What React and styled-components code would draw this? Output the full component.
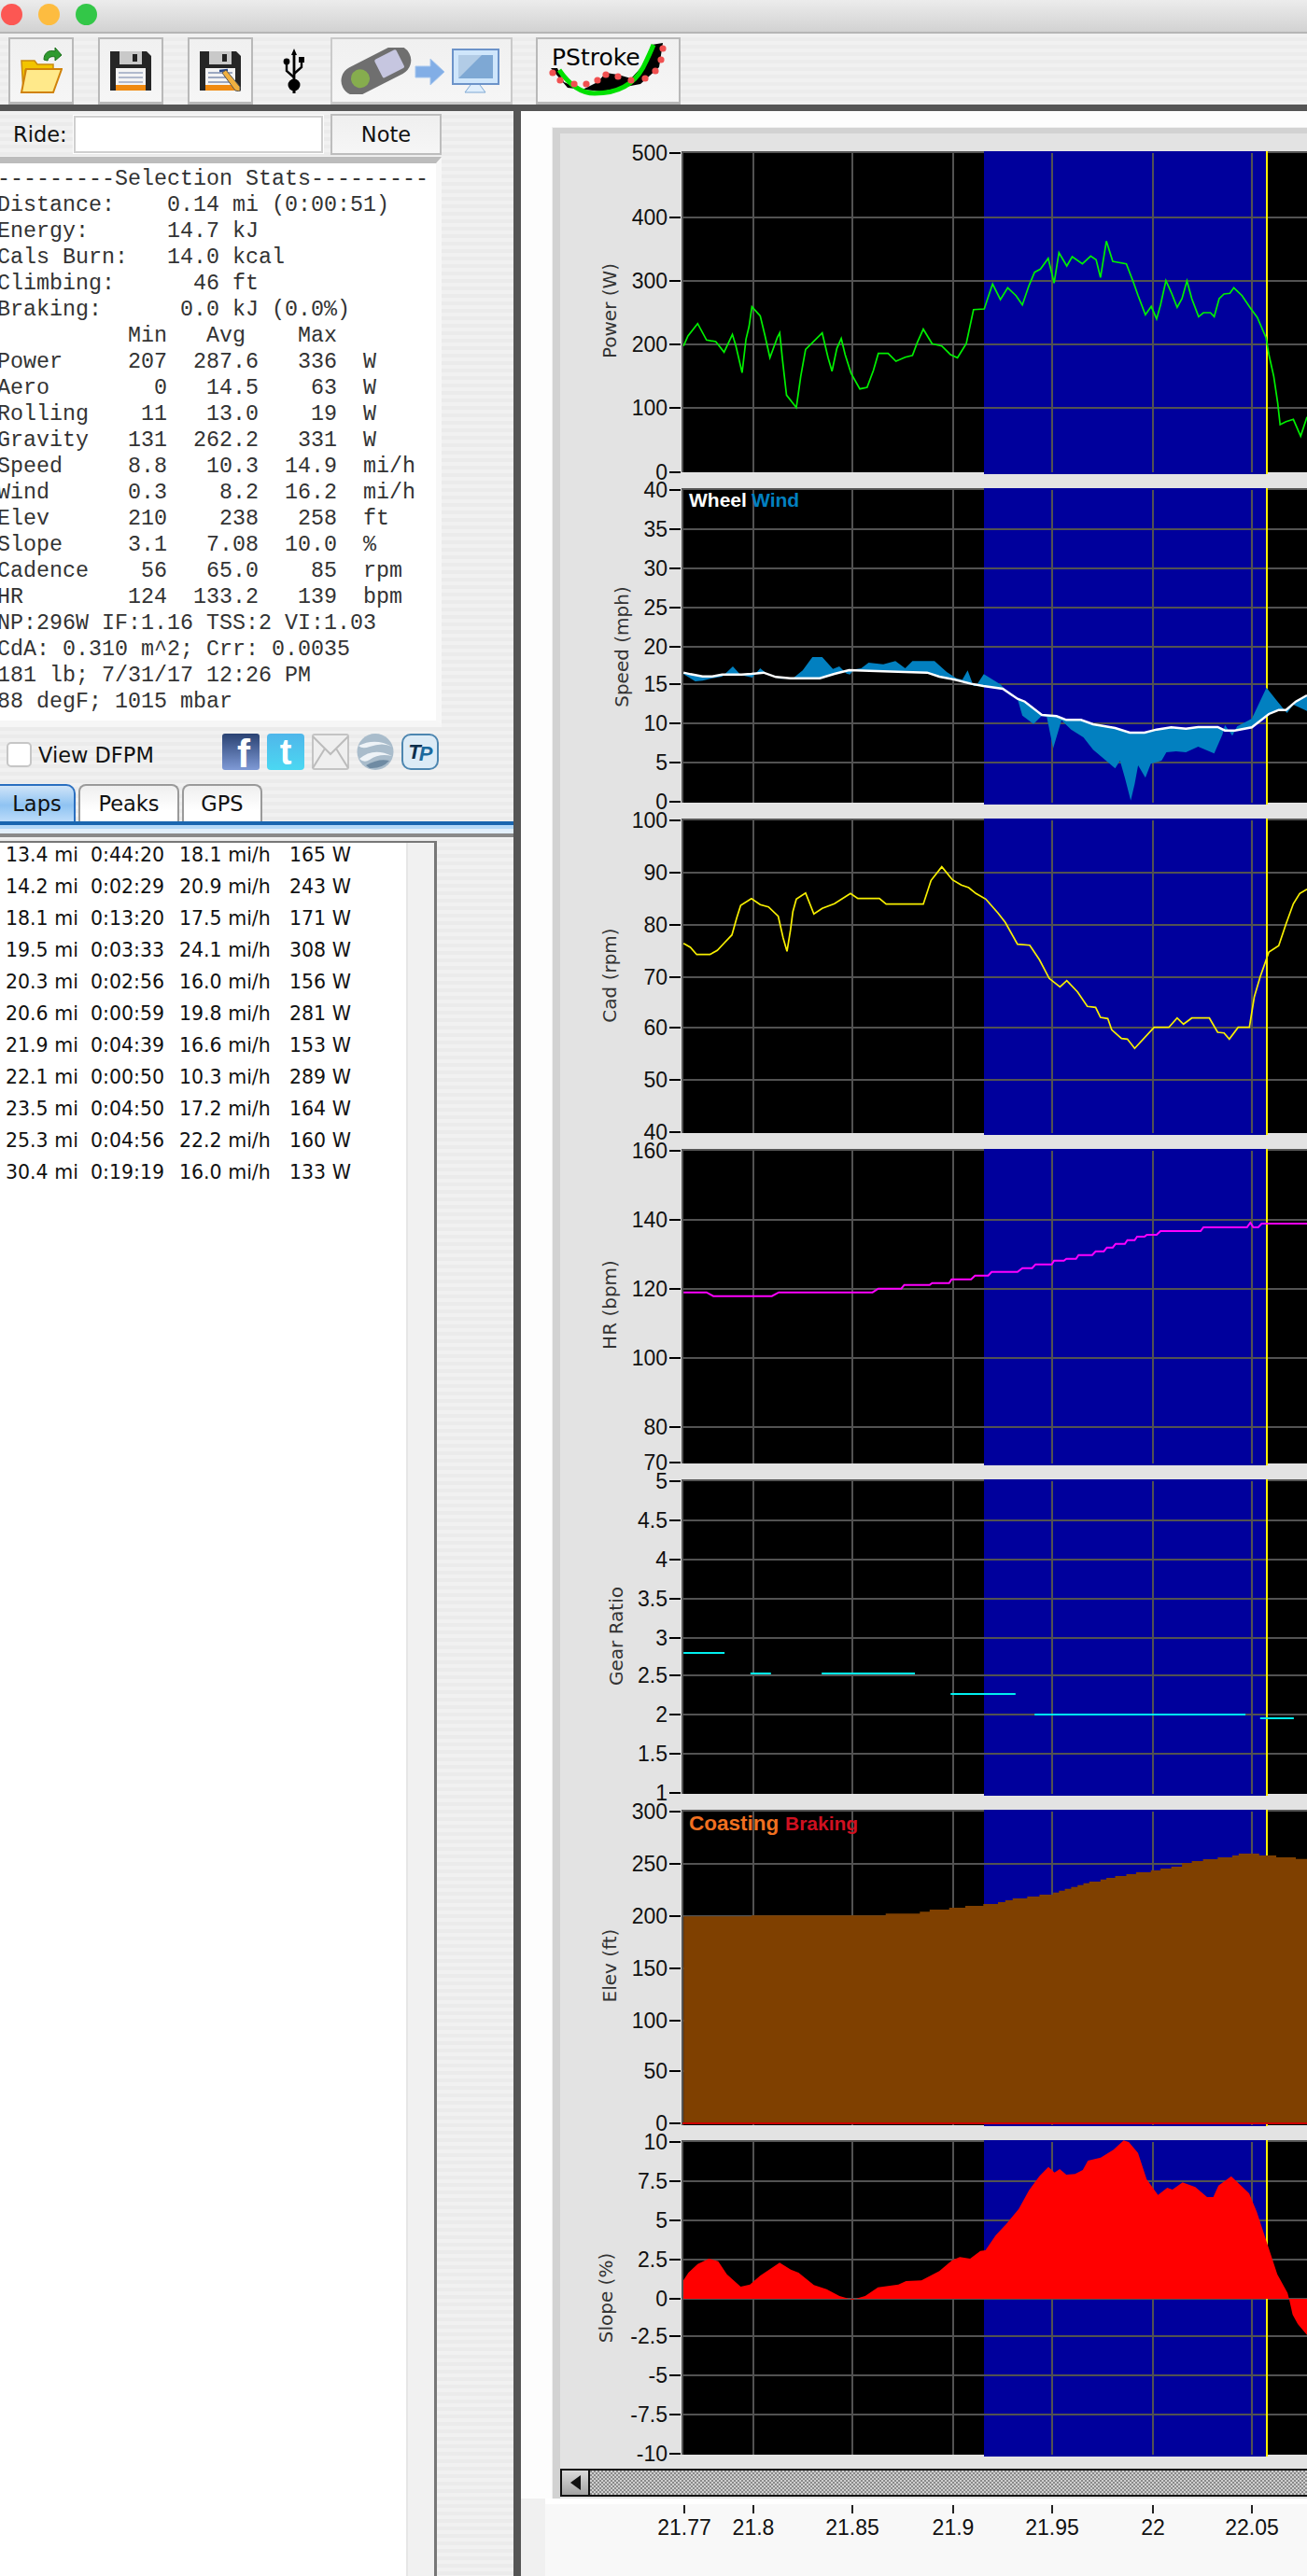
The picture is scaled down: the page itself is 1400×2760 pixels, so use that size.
import styled, { createGlobalStyle } from "styled-components"

const Global = createGlobalStyle`
    html, body {
        margin: 0;
        padding: 0;
        background: #f0f0f0;
        overflow: hidden;
    }
    * {
        box-sizing: border-box;
    }
`

const Window = styled.div`
    width: 1400px;
    height: 2760px;
    display: flex;
    flex-direction: column;
    overflow: hidden;
    font-family: "DejaVu Sans", sans-serif;
    color: #111;
`

const TitleBar = styled.div`
    height: 36px;
    flex: none;
    display: flex;
    align-items: center;
    gap: 17px;
    padding: 0 0 4px 1px;
    background: linear-gradient(#ececec, #d2d2d2);
    border-bottom: 2px solid #b6b6b6;
`

const Light = styled.span`
    width: 23px;
    height: 23px;
    border-radius: 50%;
    background: ${(p) => p.$color};
`

const Toolbar = styled.div`
    height: 76px;
    flex: none;
    display: flex;
    align-items: flex-end;
    padding-left: 9px;
    background: repeating-linear-gradient(#f1f1f1 0 4px, #ececec 4px 8px);
`

const ToolButton = styled.div`
    width: ${(p) => p.$w}px;
    height: 72px;
    margin-right: ${(p) => p.$gap}px;
    flex: none;
    display: flex;
    align-items: center;
    justify-content: center;
    border: 2px solid ${(p) => p.$line || "#b9b9b9"};
    border-bottom-width: 3px;
    background: linear-gradient(#f0f0f0, #f6f6f6);
`

const PlainTool = styled.div`
    width: 44px;
    height: 72px;
    flex: none;
    margin-right: 17px;
    display: flex;
    align-items: center;
    justify-content: center;
`

const ToolRule = styled.div`
    height: 7px;
    flex: none;
    background: #555;
`

const Body = styled.div`
    flex: 1;
    display: flex;
    min-height: 0;
`

const LeftPane = styled.div`
    width: 550px;
    flex: none;
    display: flex;
    flex-direction: column;
    background: repeating-linear-gradient(#f1f1f1 0 4px, #ebebeb 4px 8px);
`

const Divider = styled.div`
    width: 8px;
    flex: none;
    background: #555;
`

const RideRow = styled.div`
    height: 49px;
    flex: none;
    display: flex;
    align-items: center;
    padding-left: 14px;
    font-size: 22.5px;
`

const RideLabel = styled.span`
    width: 65px;
    flex: none;
`

const RideInput = styled.div`
    width: 267px;
    height: 40px;
    flex: none;
    margin-right: 8px;
    background: #fff;
    border: 2px solid #cfcfcf;
    box-shadow: 0 0 0 1px #fff;
`

const NoteButton = styled.div`
    width: 119px;
    height: 44px;
    flex: none;
    display: flex;
    align-items: center;
    justify-content: center;
    background: linear-gradient(#efefef, #f6f6f6);
    border: 2px solid #bdbdbd;
`

const StatsFrame = styled.div`
    width: 473px;
    height: 611px;
    flex: none;
    display: flex;
    flex-direction: column;
    border-top: 7px solid #bcbcbc;
    border-bottom: 7px solid #f6f6f6;
    border-right: 6px solid #f7f7f7;
`

const StatsBody = styled.div`
    flex: 1;
    padding-top: 3px;
    overflow: hidden;
    background: #fff;
`

const StatLine = styled.div`
    height: 28px;
    line-height: 28px;
    margin-left: -3px;
    white-space: pre;
    font-family: "Liberation Mono", monospace;
    font-size: 23.33px;
    color: #333;
`

const OptionsRow = styled.div`
    height: 61px;
    flex: none;
    display: flex;
    align-items: flex-start;
    justify-content: space-between;
    padding: 7px 80px 0 7px;
`

const CheckRow = styled.div`
    display: flex;
    align-items: center;
    gap: 7px;
    margin-top: 9px;
    font-size: 22.5px;
`

const CheckBox = styled.span`
    width: 27px;
    height: 27px;
    background: #fff;
    border: 2px solid #c6c6c6;
    border-radius: 5px;
`

const SocialRow = styled.div`
    display: flex;
    gap: 8px;
`

const TabBar = styled.div`
    height: 40px;
    flex: none;
    display: flex;
    gap: 3px;
    font-size: 22.5px;
`

const Tab = styled.div`
    width: ${(p) => p.$w}px;
    flex: none;
    display: flex;
    align-items: center;
    justify-content: center;
    border: 2px solid ${(p) => (p.$active ? "#2a6fc0" : "#9a9a9a")};
    border-bottom: 0;
    border-left-width: ${(p) => (p.$active ? 0 : 2)}px;
    border-radius: ${(p) => (p.$active ? "0 10px 0 0" : "8px 8px 0 0")};
    background: ${(p) =>
        p.$active
            ? "linear-gradient(#cfe4f8, #8fc3f2 55%, #bcdcfa)"
            : "linear-gradient(#efefef, #fff 70%)"};
`

const TabRule = styled.div`
    height: 21px;
    flex: none;
    background: linear-gradient(
        #1a66b0 0 4px,
        #b4d8f8 4px 8px,
        #e2effb 8px 13px,
        #8a8a8a 13px 17px,
        transparent 17px
    );
`

const LapFrame = styled.div`
    flex: 1;
    width: 468px;
    display: flex;
    border-top: 2px solid #777;
    border-right: 3px solid #777;
`

const LapList = styled.div`
    width: 435px;
    flex: none;
    display: flex;
    flex-direction: column;
    gap: 8px;
    padding-left: 6px;
    background: #fff;
`

const LapTrack = styled.div`
    flex: 1;
    background: #f1f1f1;
    border-left: 2px solid #e6e6e6;
`

const LapRow = styled.div`
    height: 26px;
    line-height: 26px;
    display: grid;
    grid-template-columns: 91px 95px 118px auto;
    font-size: 20.5px;
    white-space: pre;
`

const RightPane = styled.div`
    flex: 1;
    min-width: 0;
    display: flex;
    flex-direction: column;
    padding-top: 18px;
    background: #fdfdfd;
`

const PlotPanel = styled.div`
    margin-left: 34px;
    height: 2540px;
    flex: none;
    display: flex;
    flex-direction: column;
    background: #e3e3e3;
    border-top: 6px solid #d2d2d2;
    border-left: 8px solid #d2d2d2;
    outline: 1px solid #f0f0f0;
`

const ChartStack = styled.div`
    display: flex;
    flex-direction: column;
    gap: 15px;
    padding-top: 19px;
`

const ChartSvg = styled.svg`
    display: block;
    overflow: visible;
    flex: none;
`

const TickLabel = styled.text`
    font-family: "Liberation Sans", sans-serif;
    font-size: 23px;
    fill: #111;
    text-anchor: end;
`

const AxisTitle = styled.text`
    font-family: "DejaVu Sans", sans-serif;
    font-size: 20px;
    fill: #333;
    text-anchor: middle;
    dominant-baseline: central;
`

const LegendText = styled.text`
    font-family: "Liberation Sans", sans-serif;
    font-size: ${(p) => p.$size || 21}px;
    font-weight: 700;
    fill: ${(p) => p.$color};
`

const ScrollBar = styled.div`
    height: 30px;
    flex: none;
    margin-top: 13px;
    display: flex;
    background: repeating-conic-gradient(#8a8a8a 0 25%, #cfcfcf 0 50%) 0 0 / 4px 4px;
    border-top: 2px solid #111;
    border-bottom: 2px solid #111;
    border-left: 2px solid #111;
`

const ScrollArrow = styled.div`
    width: 30px;
    flex: none;
    display: flex;
    align-items: center;
    justify-content: center;
    background: linear-gradient(#dcdcdc, #a2a2a2);
    border-right: 2px solid #111;
    &::before {
        content: "";
        border-style: solid;
        border-width: 8px 11px 8px 0;
        border-color: transparent #111 transparent transparent;
    }
`

const AxisSvg = styled.svg`
    display: block;
    flex: 1;
    background:
        linear-gradient(90deg, #f0f0f0 0 26px, transparent 26px),
        linear-gradient(#fff 0 6px, #f8f8f8 6px);
`

const AxisLabel = styled.text`
    font-family: "Liberation Sans", sans-serif;
    font-size: 23px;
    fill: #111;
    text-anchor: middle;
`

const statLines = [
    "---------Selection Stats---------",
    "Distance:    0.14 mi (0:00:51)",
    "Energy:      14.7 kJ",
    "Cals Burn:   14.0 kcal",
    "Climbing:      46 ft",
    "Braking:      0.0 kJ (0.0%)",
    "          Min   Avg    Max",
    "Power     207  287.6   336  W",
    "Aero        0   14.5    63  W",
    "Rolling    11   13.0    19  W",
    "Gravity   131  262.2   331  W",
    "Speed     8.8   10.3  14.9  mi/h",
    "Wind      0.3    8.2  16.2  mi/h",
    "Elev      210    238   258  ft",
    "Slope     3.1   7.08  10.0  %",
    "Cadence    56   65.0    85  rpm",
    "HR        124  133.2   139  bpm",
    "NP:296W IF:1.16 TSS:2 VI:1.03",
    "CdA: 0.310 m^2; Crr: 0.0035",
    "181 lb; 7/31/17 12:26 PM",
    "88 degF; 1015 mbar",
]

const laps = [
    ["13.4 mi", "0:44:20", "18.1 mi/h", "165 W"],
    ["14.2 mi", "0:02:29", "20.9 mi/h", "243 W"],
    ["18.1 mi", "0:13:20", "17.5 mi/h", "171 W"],
    ["19.5 mi", "0:03:33", "24.1 mi/h", "308 W"],
    ["20.3 mi", "0:02:56", "16.0 mi/h", "156 W"],
    ["20.6 mi", "0:00:59", "19.8 mi/h", "281 W"],
    ["21.9 mi", "0:04:39", "16.6 mi/h", "153 W"],
    ["22.1 mi", "0:00:50", "10.3 mi/h", "289 W"],
    ["23.5 mi", "0:04:50", "17.2 mi/h", "164 W"],
    ["25.3 mi", "0:04:56", "22.2 mi/h", "160 W"],
    ["30.4 mi", "0:19:19", "16.0 mi/h", "133 W"],
]

const gridX = [807, 913, 1021, 1127, 1235, 1341]
const axisTicks = [
    ["21.77", 733],
    ["21.8", 807],
    ["21.85", 913],
    ["21.9", 1021],
    ["21.95", 1127],
    ["22", 1235],
    ["22.05", 1341],
]

// traced series: x in crop px, y in crop px / 3
const chartX = (v) => 580 + (v * 820) / 1568
const slopeX = (v) => 540 + (v * 860) / 1568
const toPoints = (list, yBase, x = chartX) =>
    list.map(([a, b]) => `${x(a).toFixed(1)},${(yBase + b / 3).toFixed(1)}`).join(" ")

const power = [[291,722],[300,690],[320,650],[338,703],[357,708],[374,742],[391,685],[398,720],[411,808],[419,700],[425,660],[431,596],[448,625],[458,690],[468,760],[475,730],[483,695],[488,680],[494,770],[502,880],[522,920],[531,820],[541,733],[575,680],[587,760],[595,803],[605,730],[614,698],[622,750],[634,810],[652,860],[667,855],[680,800],[690,746],[710,746],[726,771],[745,758],[760,752],[770,710],[782,668],[800,715],[820,722],[838,750],[852,760],[870,715],[885,605],[907,603],[915,565],[924,523],[940,573],[955,535],[972,560],[985,590],[998,530],[1010,485],[1022,475],[1038,440],[1050,520],[1060,422],[1076,465],[1087,435],[1108,458],[1125,433],[1136,445],[1145,502],[1157,385],[1170,450],[1198,458],[1212,515],[1222,560],[1237,622],[1249,595],[1260,635],[1268,590],[1279,512],[1290,550],[1302,598],[1312,570],[1322,513],[1332,570],[1346,628],[1356,615],[1370,615],[1378,628],[1388,570],[1398,555],[1410,553],[1418,535],[1435,560],[1452,600],[1466,630],[1484,695],[1490,750],[1500,820],[1508,905],[1513,975],[1525,965],[1540,958],[1555,1012],[1568,950]]

const wheel = [[291,632],[305,637],[330,644],[350,644],[370,638],[410,638],[430,636],[455,632],[480,646],[510,650],[570,650],[600,636],[630,624],[700,628],[790,632],[815,645],[845,654],[880,668],[905,675],[945,684],[975,716],[990,725],[1025,768],[1055,772],[1075,784],[1105,784],[1130,798],[1175,810],[1205,825],[1235,825],[1260,815],[1290,808],[1320,812],[1345,807],[1385,807],[1400,818],[1420,818],[1455,808],[1490,765],[1510,752],[1525,752],[1545,725],[1568,705]]

const wind = [[291,637],[315,660],[330,658],[350,650],[370,645],[392,612],[408,640],[432,648],[448,618],[465,640],[490,652],[515,650],[535,625],[555,582],[575,582],[597,620],[610,612],[625,635],[632,638],[640,622],[655,618],[670,600],[700,605],[725,595],[745,618],[760,595],[805,595],[830,630],[850,650],[862,655],[873,625],[885,675],[890,675],[906,637],[940,670],[960,705],[975,716],[985,770],[1008,797],[1025,770],[1035,775],[1048,875],[1065,785],[1085,815],[1110,840],[1130,880],[1175,940],[1185,915],[1195,970],[1207,1043],[1215,990],[1222,930],[1237,970],[1248,925],[1270,915],[1280,888],[1300,885],[1320,888],[1345,870],[1378,892],[1395,830],[1400,800],[1415,835],[1425,805],[1455,780],[1485,680],[1505,720],[1527,762],[1540,735],[1568,755]]

const cadence = [[291,422],[305,435],[318,458],[345,458],[360,445],[375,420],[390,395],[400,340],[408,300],[430,278],[448,298],[465,305],[485,335],[495,405],[503,448],[510,380],[515,320],[522,280],[541,260],[558,328],[575,310],[600,295],[633,262],[648,278],[692,278],[706,296],[782,296],[798,220],[820,176],[842,218],[860,235],[875,243],[890,262],[910,280],[935,325],[950,355],[975,425],[1000,428],[1020,475],[1040,535],[1062,562],[1076,542],[1098,578],[1118,625],[1135,628],[1145,660],[1160,664],[1168,700],[1188,728],[1200,730],[1215,760],[1255,692],[1285,692],[1302,662],[1315,682],[1332,662],[1368,662],[1385,708],[1398,710],[1409,730],[1427,692],[1450,692],[1460,595],[1472,530],[1490,450],[1510,430],[1525,360],[1540,295],[1553,262],[1568,248]]

const heart = [[291,464],[338,464],[352,476],[472,476],[486,464],[678,464],[690,452],[737,452],[743,440],[795,440],[800,434],[835,434],[840,422],[880,422],[888,410],[915,410],[922,398],[975,398],[985,386],[1005,386],[1012,374],[1045,374],[1050,362],[1070,362],[1075,356],[1095,356],[1100,344],[1128,344],[1135,332],[1152,332],[1158,320],[1170,320],[1176,308],[1195,308],[1200,296],[1215,296],[1220,285],[1235,285],[1240,279],[1260,279],[1268,267],[1350,267],[1356,255],[1445,255],[1452,240],[1458,255],[1468,255],[1475,243],[1568,243]]

const gears = [[603,291,375],[669,428,470],[669,574,765],[735,838,971],[801,1010,1442],[813,1472,1541]]

const elevation = [[291,400],[430,397],[705,391],[775,385],[795,378],[835,372],[868,366],[905,360],[935,354],[950,348],[965,342],[995,336],[1020,330],[1048,323],[1060,317],[1072,311],[1085,305],[1098,299],[1110,293],[1122,288],[1145,281],[1157,276],[1175,270],[1198,264],[1218,258],[1248,252],[1268,246],[1290,240],[1312,228],[1332,222],[1355,216],[1385,210],[1415,204],[1428,198],[1470,204],[1505,210],[1545,215],[1568,215]]

const slope = [[350,549],[350,490],[360,465],[378,437],[400,420],[418,428],[435,470],[462,510],[480,503],[500,475],[538,433],[560,455],[575,465],[605,505],[630,518],[655,540],[680,552],[705,540],[730,512],[770,503],[785,492],[815,490],[850,460],[875,425],[890,415],[910,420],[930,395],[940,393],[960,345],[980,310],[1005,260],[1025,200],[1045,155],[1063,125],[1075,143],[1085,132],[1098,150],[1115,148],[1130,135],[1140,105],[1165,95],[1190,70],[1210,40],[1220,45],[1238,80],[1255,165],[1277,215],[1295,192],[1305,198],[1325,175],[1350,190],[1373,222],[1385,222],[1395,185],[1420,155],[1455,210],[1470,270],[1490,370],[1510,470],[1530,530],[1533,549],[1540,600],[1550,630],[1568,665],[1568,549]]

const elevationPath = () => {
    const base = 2275
    let d = `M${chartX(elevation[0][0]).toFixed(1)} ${base}`
    elevation.forEach(([a, b], i) => {
        d += ` V${(1920 + b / 3).toFixed(1)}`
        const next = elevation[i + 1]
        if (next) d += ` H${chartX(next[0]).toFixed(1)}`
    })
    return d + ` V${base} Z`
}

const charts = [
    {
        title: "Power (W)", titleX: 653, titleY: 333, top: 162, height: 346, plotEnd: 506,
        ticks: [["500",164],["400",233],["300",301],["200",369],["100",437],["0",506]],
        data: <polyline points={toPoints(power, 130)} fill="none" stroke="#00f000" strokeWidth="1.7" />,
    },
    {
        title: "Speed (mph)", titleX: 666, titleY: 693, top: 523, height: 339, plotEnd: 860,
        ticks: [["40",525],["35",567],["30",609],["25",651],["20",693],["15",733],["10",775],["5",817],["0",859]],
        data: (
            <>
                <polygon points={toPoints([...wheel, ...[...wind].reverse()], 510)} fill="#0280c0" />
                <polyline points={toPoints(wheel, 510)} fill="none" stroke="#fff" strokeWidth="2.4" />
                <LegendText x="738" y="543" $color="#fff">Wheel</LegendText>
                <LegendText x="805" y="543" $color="#0280c0">Wind</LegendText>
            </>
        ),
    },
    {
        title: "Cad (rpm)", titleX: 653, titleY: 1045, top: 877, height: 339, plotEnd: 1214,
        ticks: [["100",879],["90",935],["80",991],["70",1047],["60",1101],["50",1157],["40",1213]],
        data: <polyline points={toPoints(cadence, 870)} fill="none" stroke="#f8f000" strokeWidth="1.7" />,
    },
    {
        title: "HR (bpm)", titleX: 653, titleY: 1398, top: 1231, height: 339, plotEnd: 1568,
        ticks: [["160",1233],["140",1307],["120",1381],["100",1455],["80",1529],["70",1567]],
        data: <polyline points={toPoints(heart, 1230)} fill="none" stroke="#ff00ff" strokeWidth="2" />,
    },
    {
        title: "Gear Ratio", titleX: 660, titleY: 1753, top: 1585, height: 339, plotEnd: 1922,
        ticks: [["5",1587],["4.5",1629],["4",1671],["3.5",1713],["3",1755],["2.5",1795],["2",1837],["1.5",1879],["1",1921]],
        data: gears.map(([y, a, b]) => (
            <line key={a} x1={chartX(a)} x2={chartX(b)} y1={1570 + y / 3} y2={1570 + y / 3} stroke="#00f0f0" strokeWidth="2" />
        )),
    },
    {
        title: "Elev (ft)", titleX: 653, titleY: 2106, top: 1939, height: 339, plotEnd: 2277,
        ticks: [["300",1941],["250",1997],["200",2053],["150",2109],["100",2165],["50",2219],["0",2275]],
        data: (
            <>
                <path d={elevationPath()} fill="#7f4000" />
                <line x1="731" x2="1400" y1="2275" y2="2275" stroke="#cc0000" strokeWidth="2" />
                <LegendText x="738" y="1961" $color="#f07020" $size={22.5}>Coasting</LegendText>
                <LegendText x="841" y="1961" $color="#d01020">Braking</LegendText>
            </>
        ),
    },
    {
        title: "Slope (%)", titleX: 649, titleY: 2462, top: 2293, height: 339, plotEnd: 2630,
        ticks: [["10",2295],["7.5",2337],["5",2379],["2.5",2421],["0",2463],["-2.5",2503],["-5",2545],["-7.5",2587],["-10",2629]],
        data: <polygon points={toPoints(slope, 2280, slopeX)} fill="#ff0000" />,
    },
]

function Chart({ chart }) {
    const { title, titleX, titleY, top, height, plotEnd, ticks, data } = chart
    const inner = ticks.slice(1, -1)
    return (
        <ChartSvg width="800" height={height} viewBox={`600 ${top} 800 ${height}`}>
            <rect x="731" y={top} width="669" height={plotEnd - top} fill="#000" />
            <line x1="731" x2="1400" y1={top + 1} y2={top + 1} stroke="#555" strokeWidth="2" />
            <rect x="1054" y={top} width="302" height={height} fill="#00009c" />
            {gridX.map((x) => (
                <line key={x} x1={x} x2={x} y1={top + 2} y2={plotEnd} stroke="#525252" strokeWidth="2" />
            ))}
            {inner.map(([label, y]) => (
                <line key={label} x1="731" x2="1400" y1={y} y2={y} stroke="#525252" strokeWidth="2" />
            ))}
            <line x1="731" x2="731" y1={top} y2={plotEnd} stroke="#555" strokeWidth="2" />
            <line x1="1357" x2="1357" y1={top} y2={top + height} stroke="#fff000" strokeWidth="2" />
            {data}
            {ticks.map(([label, y]) => (
                <g key={label}>
                    <line x1="717" x2="729" y1={y} y2={y} stroke="#000" strokeWidth="2" />
                    <TickLabel x="715" y={y + 8}>{label}</TickLabel>
                </g>
            ))}
            <AxisTitle x={titleX} y={titleY} transform={`rotate(-90 ${titleX} ${titleY})`}>{title}</AxisTitle>
        </ChartSvg>
    )
}

const FolderIcon = () => (
    <svg width="46" height="50" viewBox="0 0 46 50">
        <path d="M26 13 C26 5 32 2 38 4 L38 0 L45 8 L38 14 L38 10 C34 9 31 10 30 14 Z" fill="#2f9a2f" stroke="#1d6e1d" />
        <path d="M2 14 L16 14 L19 18 L36 18 L36 24 L6 24 L4 48 Z" fill="#f2c400" stroke="#c98a10" strokeWidth="1.5" />
        <path d="M7 23 L45 23 L36 48 L2 48 Z" fill="#ffe98a" stroke="#d0820a" strokeWidth="2" />
    </svg>
)

const FloppyIcon = ({ pencil }) => (
    <svg width="46" height="44" viewBox="0 0 46 44">
        <path d="M1 1 H40 L45 6 V43 H1 Z" fill="#262626" />
        <rect x="11" y="1" width="24" height="14" fill="#c9c9c9" />
        <rect x="25" y="4" width="5" height="8" fill="#222" />
        <rect x="7" y="19" width="32" height="24" fill="#f4f4f4" />
        <rect x="7" y="37" width="32" height="6" fill="#f08a10" />
        <path d="M10 24 H36 M10 29 H36 M10 34 H36" stroke={pencil ? "#7f8fb0" : "#9aa6c0"} strokeWidth="1.5" />
        {pencil && <path d="M22 22 L31 21" stroke="#22458a" strokeWidth="2.5" />}
        {pencil && <path d="M25 24 L29 21 L44 39 L44 44 L39 43 Z" fill="#f0b040" stroke="#555" />}
    </svg>
)

const UsbIcon = () => (
    <svg width="26" height="48" viewBox="0 0 26 48">
        <path d="M13 0 L16 7 H14.4 V34 H11.6 V7 H10 Z" fill="#000" />
        <path d="M13 31 L5 24 V16 M13 27 L21 20 V14" stroke="#000" strokeWidth="2.4" fill="none" />
        <circle cx="5" cy="14" r="3.4" fill="#000" />
        <rect x="18" y="9" width="6" height="6" fill="#000" />
        <circle cx="13" cy="39" r="6.5" fill="#000" />
        <rect x="11.5" y="43" width="3" height="5" fill="#000" />
    </svg>
)

const SyncIcon = () => (
    <svg width="175" height="50" viewBox="0 0 175 50">
        <g transform="rotate(-27 38 25)">
            <rect x="-1" y="9" width="80" height="32" rx="16" fill="#6f6f6f" />
            <rect x="42" y="14" width="26" height="22" rx="2" fill="#c6c6e0" />
            <circle cx="20" cy="25" r="10" fill="#86ad4e" />
        </g>
        <path d="M81 20 H97 V12 L112 26 L97 40 V32 H81 Z" fill="#82aee6" stroke="#a7c7ef" />
        <rect x="121" y="2" width="49" height="37" fill="#cfe6fb" stroke="#6c93c9" strokeWidth="2" />
        <rect x="127" y="8" width="37" height="25" fill="#7ea8d4" />
        <path d="M127 33 V8 H152 Z" fill="#b2cce6" />
        <path d="M140 40 L134 48 H156 L150 40" fill="#dfeefc" stroke="#7ea8d4" />
    </svg>
)

const logoDots = [[18,38],[26,46],[41,50],[54,50],[66,46],[75,40],[88,42],[102,46],[117,44],[128,36],[134,24],[136,12]]

const PStrokeLogo = () => (
    <svg width="151" height="67" viewBox="2 2 151 67">
        <path d="M16 33 L23 33 L30 48 L50 56 L66 48 L75 38 L88 40 L102 44 L115 30 L124 8 L136 6 L132 32 L112 50 L70 58 L34 54 Z" fill="#000" />
        <path d="M25 35 Q42 60 63 60 Q100 60 115 32 Q122 18 126 8" fill="none" stroke="#00e000" strokeWidth="5" />
        {logoDots.map(([x, y]) => (
            <circle key={x} cx={x} cy={y} r="3.6" fill="#f05050" />
        ))}
        <text x="17" y="30" fontFamily="DejaVu Sans, sans-serif" fontSize="25" fill="#000">PStroke</text>
    </svg>
)

const IconText = styled.text`
    font-family: "Liberation Sans", sans-serif;
    font-weight: 700;
    fill: ${(p) => p.$color || "#fff"};
    text-anchor: middle;
`

const SocialIcons = () => (
    <SocialRow>
        <svg width="40" height="39" viewBox="0 0 40 39">
            <defs>
                <linearGradient id="fb" x1="0" y1="0" x2="0" y2="1">
                    <stop offset="0" stopColor="#2a4272" />
                    <stop offset="1" stopColor="#7f9ad6" />
                </linearGradient>
                <linearGradient id="tw" x1="0" y1="0" x2="0" y2="1">
                    <stop offset="0" stopColor="#4fb6ea" />
                    <stop offset="1" stopColor="#4bd8f2" />
                </linearGradient>
            </defs>
            <rect width="40" height="39" rx="3" fill="url(#fb)" />
            <IconText x="23" y="36" fontSize="42">f</IconText>
        </svg>
        <svg width="40" height="39" viewBox="0 0 40 39">
            <rect width="40" height="39" rx="4" fill="url(#tw)" />
            <IconText x="20" y="33" fontSize="38">t</IconText>
        </svg>
        <svg width="40" height="39" viewBox="0 0 40 39">
            <rect x="1" y="1" width="38" height="37" rx="2" fill="#efefef" stroke="#c4c4c4" strokeWidth="2" />
            <path d="M1 3 L20 22 L39 3 M1 37 L14 16 M39 37 L26 16" fill="none" stroke="#bcbcbc" strokeWidth="2" />
        </svg>
        <svg width="40" height="39" viewBox="0 0 40 39">
            <circle cx="20" cy="19.5" r="19.5" fill="#a9bccb" />
            <path d="M2 13 Q20 4 38 14 Q28 9 14 14 Q6 17 2 13 Z M3 27 Q18 14 38 24 Q24 21 14 28 Q8 32 3 27 Z" fill="#eef3f7" />
            <path d="M10 34 Q24 26 35 29 Q27 38 14 37 Z" fill="#6f8ba3" />
        </svg>
        <svg width="40" height="39" viewBox="0 0 40 39">
            <rect x="1" y="1" width="38" height="37" rx="9" fill="#dcebf6" stroke="#4d86b0" strokeWidth="2" />
            <IconText x="14" y="27" fontSize="22" fontStyle="italic" $color="#0e2f4c">T</IconText>
            <IconText x="26" y="29" fontSize="22" fontStyle="italic" $color="#1b6a9e">P</IconText>
        </svg>
    </SocialRow>
)

export default function App() {
    return (
        <Window>
            <Global />
            <TitleBar>
                <Light $color="#fc5753" />
                <Light $color="#fdbc40" />
                <Light $color="#33c748" />
            </TitleBar>
            <Toolbar>
                <ToolButton $w={70} $gap={26}><FolderIcon /></ToolButton>
                <ToolButton $w={70} $gap={26}><FloppyIcon /></ToolButton>
                <ToolButton $w={70} $gap={22}><FloppyIcon pencil /></ToolButton>
                <PlainTool><UsbIcon /></PlainTool>
                <ToolButton $w={195} $gap={25} $line="#cacaca"><SyncIcon /></ToolButton>
                <ToolButton $w={155} $gap={0}><PStrokeLogo /></ToolButton>
            </Toolbar>
            <ToolRule />
            <Body>
                <LeftPane>
                    <RideRow>
                        <RideLabel>Ride:</RideLabel>
                        <RideInput />
                        <NoteButton>Note</NoteButton>
                    </RideRow>
                    <StatsFrame>
                        <StatsBody>
                            {statLines.map((line) => (
                                <StatLine key={line}>{line}</StatLine>
                            ))}
                        </StatsBody>
                    </StatsFrame>
                    <OptionsRow>
                        <CheckRow>
                            <CheckBox />
                            View DFPM
                        </CheckRow>
                        <SocialIcons />
                    </OptionsRow>
                    <TabBar>
                        <Tab $w={81} $active>Laps</Tab>
                        <Tab $w={108}>Peaks</Tab>
                        <Tab $w={86}>GPS</Tab>
                    </TabBar>
                    <TabRule />
                    <LapFrame>
                        <LapList>
                            {laps.map((lap) => (
                                <LapRow key={lap[0]}>
                                    {lap.map((cell) => (
                                        <span key={cell}>{cell}</span>
                                    ))}
                                </LapRow>
                            ))}
                        </LapList>
                        <LapTrack />
                    </LapFrame>
                </LeftPane>
                <Divider />
                <RightPane>
                    <PlotPanel>
                        <ChartStack>
                            {charts.map((chart) => (
                                <Chart key={chart.title} chart={chart} />
                            ))}
                        </ChartStack>
                        <ScrollBar>
                            <ScrollArrow />
                        </ScrollBar>
                    </PlotPanel>
                    <AxisSvg width="842" height="83" viewBox="558 2677 842 83">
                        {axisTicks.map(([label, x]) => (
                            <g key={label}>
                                <line x1={x} x2={x} y1="2684" y2="2693" stroke="#222" strokeWidth="2" />
                                <AxisLabel x={x} y="2716">{label}</AxisLabel>
                            </g>
                        ))}
                    </AxisSvg>
                </RightPane>
            </Body>
        </Window>
    )
}
